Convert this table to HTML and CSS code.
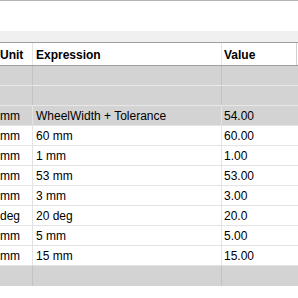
FILE: index.html
```html
<!DOCTYPE html>
<html>
<head>
<meta charset="utf-8">
<link rel="stylesheet" href="styles.css">
</head>
<body>
<div class="topline"></div>
<div class="blank"></div>
<div class="band"></div>
<div class="grid">
  <div class="row head">
    <div class="cell c1">Unit</div>
    <div class="cell c2">Expression</div>
    <div class="cell c3">Value</div>
  </div>
  <div class="row group"><div class="cell c1"></div><div class="cell c2"></div><div class="cell c3"></div></div>
  <div class="row group"><div class="cell c1"></div><div class="cell c2"></div><div class="cell c3"></div></div>
  <div class="row sel"><div class="cell c1">mm</div><div class="cell c2">WheelWidth + Tolerance</div><div class="cell c3">54.00</div></div>
  <div class="row"><div class="cell c1">mm</div><div class="cell c2">60 mm</div><div class="cell c3">60.00</div></div>
  <div class="row"><div class="cell c1">mm</div><div class="cell c2">1 mm</div><div class="cell c3">1.00</div></div>
  <div class="row"><div class="cell c1">mm</div><div class="cell c2">53 mm</div><div class="cell c3">53.00</div></div>
  <div class="row"><div class="cell c1">mm</div><div class="cell c2">3 mm</div><div class="cell c3">3.00</div></div>
  <div class="row"><div class="cell c1">deg</div><div class="cell c2">20 deg</div><div class="cell c3">20.0</div></div>
  <div class="row"><div class="cell c1">mm</div><div class="cell c2">5 mm</div><div class="cell c3">5.00</div></div>
  <div class="row"><div class="cell c1">mm</div><div class="cell c2">15 mm</div><div class="cell c3">15.00</div></div>
  <div class="row group last"><div class="cell c1"></div><div class="cell c2"></div><div class="cell c3"></div></div>
</div>
</body>
</html>
```
FILE: styles.css
```css
html, body {
  margin: 0;
  padding: 0;
  background: #ffffff;
  overflow: hidden;
}
body {
  width: 298px;
  height: 298px;
  font-family: "Liberation Sans", Arial, sans-serif;
  font-size: 12px;
  color: #000;
}
.topline {
  height: 1px;
  background: #b4b4b4;
}
.blank {
  height: 30px;
  background: #ffffff;
}
.band {
  height: 11px;
  background: #f0f0f0;
}
.grid {
  border-top: 1px solid #a0a0a0;
}
.row {
  display: grid;
  grid-template-columns: 33px 189px 75px 1px;
  height: 19px;
  border-bottom: 1px solid #e3e3e3;
}
.cell {
  display: flex;
  align-items: center;
  white-space: nowrap;
  overflow: hidden;
  border-right: 1px solid #e3e3e3;
}
.c1 { padding-left: 0; }
.c2 { padding-left: 3px; }
.c3 { padding-left: 2px; }
.head {
  height: 22px;
  border-bottom: 1px solid #a0a0a0;
  font-weight: bold;
  background: #fff;
}
.head .cell {
  border-right: 1px solid #e5e5e5;
  padding-top: 1px;
}
.head .c3 {
  border-right: 1px solid #d0d0d0;
}
.group {
  background: #d3d3d3;
}
.group .cell {
  border-right-color: #c2c2c2;
}
.group .c3 {
  border-right: none;
}
.group {
  border-bottom-color: #e8e8e8;
}
.sel {
  background: #d3d3d3;
}
.sel .c3 {
  border-right: none;
}
.row:not(.head):not(.group):not(.sel) .c3 {
  border-right: none;
}
.last {
  border-bottom: none;
  height: 20px;
}
```
